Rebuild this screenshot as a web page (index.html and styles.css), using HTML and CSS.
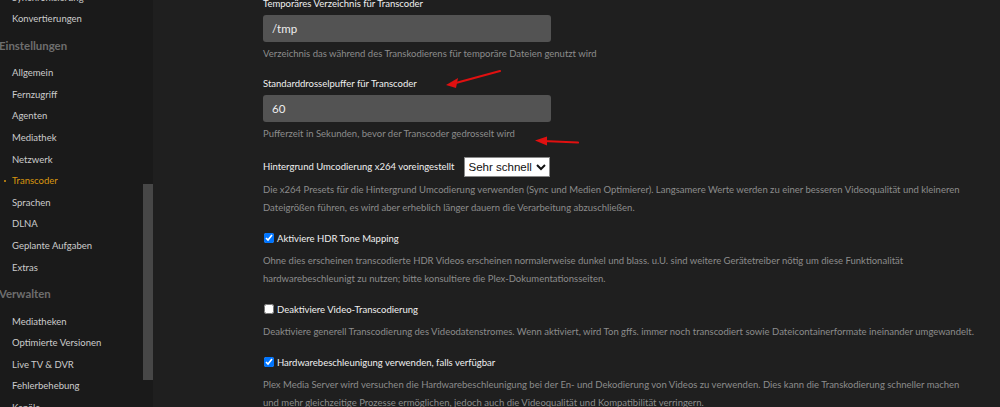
FILE: index.html
```html
<!DOCTYPE html>
<html>
<head>
    <title>Einstellungen - Transcoder</title>
    <link rel="stylesheet" href="styles.css">
</head>
<body>
    <div class="layout">
        <nav class="sidebar">
            <ul class="nav-list">
                <li class="nav-item">Synchronisierung</li>
                <li class="nav-item">Konvertierungen</li>
                <li class="nav-heading">Einstellungen</li>
                <li class="nav-item">Allgemein</li>
                <li class="nav-item">Fernzugriff</li>
                <li class="nav-item">Agenten</li>
                <li class="nav-item">Mediathek</li>
                <li class="nav-item">Netzwerk</li>
                <li class="nav-item active">Transcoder</li>
                <li class="nav-item">Sprachen</li>
                <li class="nav-item">DLNA</li>
                <li class="nav-item">Geplante Aufgaben</li>
                <li class="nav-item">Extras</li>
                <li class="nav-heading">Verwalten</li>
                <li class="nav-item">Mediatheken</li>
                <li class="nav-item">Optimierte Versionen</li>
                <li class="nav-item">Live TV &amp; DVR</li>
                <li class="nav-item">Fehlerbehebung</li>
                <li class="nav-item">Kanäle</li>
            </ul>
            <div class="scroll-thumb"></div>
        </nav>

        <main class="content">
            <form class="settings">
                <div class="setting">
                    <label class="setting-label" for="tmpdir">Temporäres Verzeichnis für Transcoder</label>
                    <input class="text-input" id="tmpdir" type="text" value="/tmp">
                    <p class="help">Verzeichnis das während des Transkodierens für temporäre Dateien genutzt wird</p>
                </div>

                <div class="setting">
                    <label class="setting-label" for="throttle">Standarddrosselpuffer für Transcoder</label>
                    <input class="text-input" id="throttle" type="text" value="60">
                    <p class="help">Pufferzeit in Sekunden, bevor der Transcoder gedrosselt wird</p>
                </div>

                <div class="setting">
                    <div class="select-row">
                        <label class="setting-label" for="preset">Hintergrund Umcodierung x264 voreingestellt</label>
                        <select class="preset-select" id="preset">
                            <option>Sehr schnell</option>
                        </select>
                    </div>
                    <p class="help">Die x264 Presets für die Hintergrund Umcodierung verwenden (Sync und Medien Optimierer). Langsamere Werte werden zu einer besseren Videoqualität und kleineren Dateigrößen führen, es wird aber erheblich länger dauern die Verarbeitung abzuschließen.</p>
                </div>

                <div class="setting">
                    <label class="check-row"><input type="checkbox" checked> Aktiviere HDR Tone Mapping</label>
                    <p class="help">Ohne dies erscheinen transcodierte HDR Videos erscheinen normalerweise dunkel und blass. u.U. sind weitere Gerätetreiber nötig um diese Funktionalität hardwarebeschleunigt zu nutzen; bitte konsultiere die Plex-Dokumentationsseiten.</p>
                </div>

                <div class="setting">
                    <label class="check-row"><input type="checkbox"> Deaktiviere Video-Transcodierung</label>
                    <p class="help">Deaktiviere generell Transcodierung des Videodatenstromes. Wenn aktiviert, wird Ton gffs. immer noch transcodiert sowie Dateicontainerformate ineinander umgewandelt.</p>
                </div>

                <div class="setting">
                    <label class="check-row"><input type="checkbox" checked> Hardwarebeschleunigung verwenden, falls verfügbar</label>
                    <p class="help">Plex Media Server wird versuchen die Hardwarebeschleunigung bei der En- und Dekodierung von Videos zu verwenden. Dies kann die Transkodierung schneller machen und mehr gleichzeitige Prozesse ermöglichen, jedoch auch die Videoqualität und Kompatibilität verringern.</p>
                </div>
            </form>

            <!-- hand-drawn markers -->
            <svg class="marker marker-label" width="60" height="20" viewBox="0 0 60 20">
                <path d="M58 2 L10 15" stroke="#e01010" stroke-width="2.2" stroke-linecap="round" fill="none"/>
                <path d="M4 16 L16 9 L14 19 Z" fill="#e01010"/>
            </svg>
            <svg class="marker marker-help" width="46" height="10" viewBox="0 0 46 10">
                <path d="M45 6.5 L10 5" stroke="#e01010" stroke-width="2.2" stroke-linecap="round" fill="none"/>
                <path d="M2 4.5 L14 0.5 L14 9.5 Z" fill="#e01010"/>
            </svg>
        </main>
    </div>
</body>
</html>
```

FILE: styles.css
```css
html, body {
    margin: 0;
    height: 100%;
    overflow: hidden;
}
body {
    font-family: Lato, "Open Sans", sans-serif;
    background-color: #1f1f1f;
    color: #e6e6e6;
}
.layout {
    display: flex;
    height: 100%;
}

/* sidebar */
.sidebar {
    position: relative;
    width: 153px;
    flex-shrink: 0;
    background-color: #1a1a1a;
    overflow: hidden;
}
.nav-list {
    list-style: none;
    margin: -13.4px 0 0 0;
    padding: 0;
}
.nav-item {
    position: relative;
    height: 21.6px;
    line-height: 21.6px;
    padding-left: 12px;
    font-size: 9.5px;
    color: #cccccc;
    white-space: nowrap;
}
.nav-item.active {
    color: #d9960f;
}
.nav-item.active::before {
    content: "";
    position: absolute;
    left: 4px;
    top: 10px;
    width: 2px;
    height: 2px;
    border-radius: 50%;
    background-color: #d9960f;
}
.nav-heading {
    height: 32.4px;
    line-height: 32.4px;
    font-size: 11.4px;
    font-weight: 700;
    color: #6e6e6e;
    margin-left: -1px;
}
.scroll-thumb {
    position: absolute;
    left: 143px;
    top: 184px;
    width: 10px;
    height: 196px;
    background-color: #474747;
}

/* main settings column */
.content {
    position: relative;
    flex: 1;
    padding-left: 110px;
}
.settings {
    width: 712px;
    margin-top: -5px;
}
.setting {
    margin-bottom: 12px;
}
.setting-label {
    display: block;
    font-size: 9.5px;
    line-height: 18px;
    color: #f0f0f0;
}
.text-input {
    display: block;
    box-sizing: border-box;
    width: 288px;
    height: 27px;
    margin-top: 2px;
    padding: 0 9px;
    border: none;
    border-radius: 3px;
    background-color: #535353;
    color: #eeeeee;
    font-family: inherit;
    font-size: 11.5px;
}
.help {
    margin: 3px 0 0 0;
    font-size: 9.5px;
    line-height: 18px;
    color: #8c8c8c;
}
.select-row {
    display: flex;
    align-items: center;
    height: 24px;
}
.select-row .setting-label {
    display: inline;
}
.preset-select {
    margin-left: 9px;
    height: 20px;
    font-family: "Liberation Sans", Arial, sans-serif;
    font-size: 11.5px;
    color: #111;
    background-color: #fff;
    border: 1px solid #888;
    border-radius: 0;
}
.select-row + .help {
    margin-top: 2px;
}
.check-row {
    display: flex;
    align-items: center;
    height: 18px;
    font-size: 9.5px;
    color: #f0f0f0;
}
.check-row input {
    width: 10px;
    height: 10px;
    margin: 0 3px 0 1px;
}
.check-row + .help {
    margin-top: 5px;
}

/* red arrows over the form */
.marker {
    position: absolute;
}
.marker-label {
    left: 289px;
    top: 69px;
}
.marker-help {
    left: 380px;
    top: 136px;
}
```
